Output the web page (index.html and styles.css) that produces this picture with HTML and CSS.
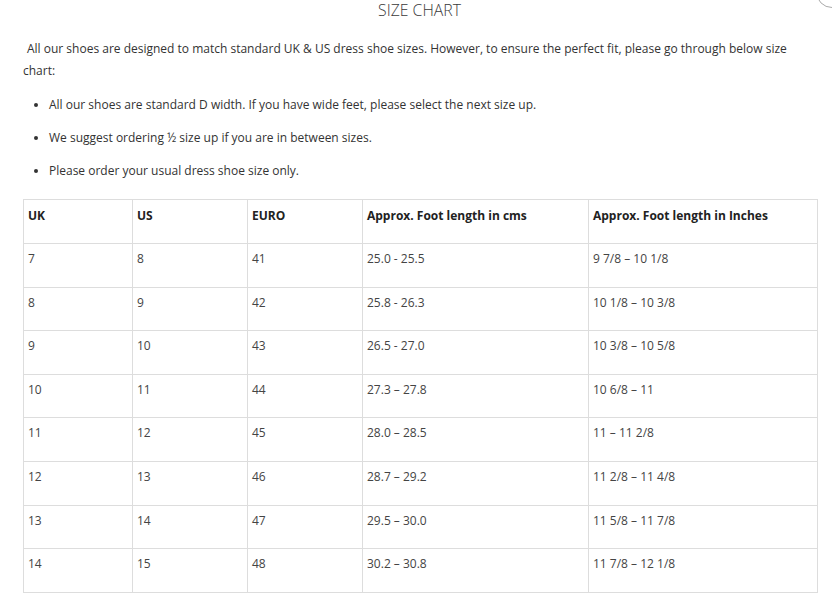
FILE: index.html
```html
<!DOCTYPE html>
<html>
<head>
<meta charset="utf-8">
<link rel="stylesheet" href="styles.css">
</head>
<body>
<div class="close"></div>
<h1 class="title">SIZE CHART</h1>
<p class="intro">All our shoes are designed to match standard UK &amp; US dress shoe sizes. However, to ensure the perfect fit, please go through below size chart:</p>
<ul class="notes">
  <li>All our shoes are standard D width. If you have wide feet, please select the next size up.</li>
  <li>We suggest ordering ½ size up if you are in between sizes.</li>
  <li>Please order your usual dress shoe size only.</li>
</ul>
<table class="chart">
  <colgroup>
    <col class="c1"><col class="c2"><col class="c3"><col class="c4"><col class="c5">
  </colgroup>
  <thead>
    <tr><th>UK</th><th>US</th><th>EURO</th><th>Approx. Foot length in cms</th><th>Approx. Foot length in Inches</th></tr>
  </thead>
  <tbody>
    <tr><td>7</td><td>8</td><td>41</td><td>25.0 - 25.5</td><td>9 7/8 – 10 1/8</td></tr>
    <tr><td>8</td><td>9</td><td>42</td><td>25.8 - 26.3</td><td>10 1/8 – 10 3/8</td></tr>
    <tr><td>9</td><td>10</td><td>43</td><td>26.5 - 27.0</td><td>10 3/8 – 10 5/8</td></tr>
    <tr><td>10</td><td>11</td><td>44</td><td>27.3 – 27.8</td><td>10 6/8 – 11</td></tr>
    <tr><td>11</td><td>12</td><td>45</td><td>28.0 – 28.5</td><td>11 – 11 2/8</td></tr>
    <tr><td>12</td><td>13</td><td>46</td><td>28.7 – 29.2</td><td>11 2/8 – 11 4/8</td></tr>
    <tr><td>13</td><td>14</td><td>47</td><td>29.5 – 30.0</td><td>11 5/8 – 11 7/8</td></tr>
    <tr><td>14</td><td>15</td><td>48</td><td>30.2 – 30.8</td><td>11 7/8 – 12 1/8</td></tr>
  </tbody>
</table>
</body>
</html>
```
FILE: styles.css
```css
html, body {
  margin: 0;
  padding: 0;
  background: #fff;
}
body {
  font-family: "Open Sans", "Noto Sans", sans-serif;
  font-size: 12px;
  color: #333;
  padding: 0 16px 0 23px;
  position: relative;
  overflow: hidden;
  height: 603px;
}
.close {
  position: absolute;
  right: -16px;
  top: -24px;
  width: 30px;
  height: 30px;
  border: 1px solid #aaa;
  border-radius: 50%;
}
.title {
  margin: 0;
  font-size: 15.8px;
  font-weight: 300;
  text-align: center;
  line-height: 20px;
  color: #3a3a3a;
}
.intro {
  margin: 18px 0 0;
  padding: 0 24px 0 0;
  text-indent: 4px;
  line-height: 22px;
}
.notes {
  margin: 12px 0 0;
  padding-left: 26px;
  list-style: disc;
}
.notes li {
  line-height: 22px;
  margin-bottom: 11px;
}
.chart {
  margin-top: 17px;
  border-collapse: collapse;
  table-layout: fixed;
  width: 794px;
}
.c1 { width: 109px; }
.c2 { width: 115px; }
.c3 { width: 115px; }
.c4 { width: 226px; }
.c5 { width: 229px; }
.chart th, .chart td {
  border: 1px solid #ddd;
  text-align: left;
  vertical-align: top;
  padding: 7px 4px 0;
  line-height: 16px;
}
.chart th {
  font-weight: 700;
  color: #222;
  padding-top: 8px;
  height: 35px;
}
.chart td {
  color: #444;
  height: 35.6px;
}
```
